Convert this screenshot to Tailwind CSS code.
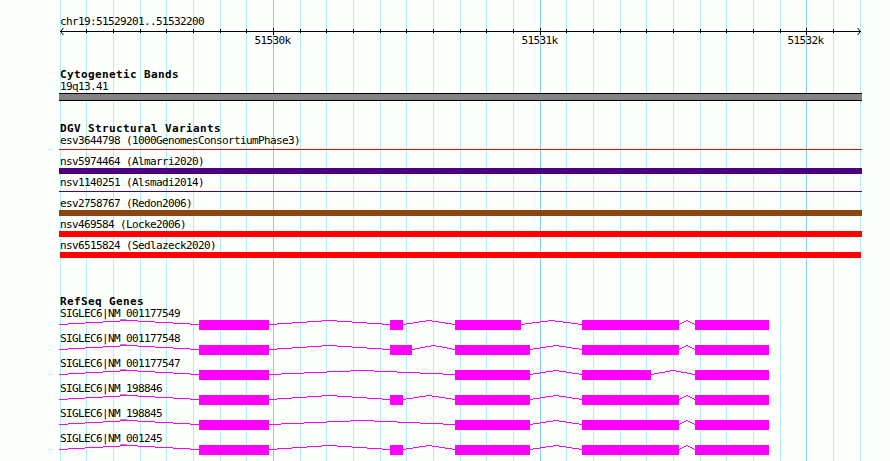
<!DOCTYPE html>
<html lang="en">
<head>
  <meta charset="UTF-8" />
  <meta name="viewport" content="width=device-width, initial-scale=1.0" />
  <title>chr19:51529201..51532200</title>
  <script src="https://cdn.jsdelivr.net/npm/@tailwindcss/browser@4"></script>
</head>
<body class="relative h-[461px] overflow-hidden bg-[#fdfffc] text-black font-['DejaVu_Sans_Mono','Liberation_Mono',monospace] text-[11px] leading-[12px] tracking-[-0.622px]">

  <!-- Grid lines behind every track -->
  <svg id="grid" class="absolute inset-0" width="890" height="461" shape-rendering="crispEdges"></svg>

  <main class="relative ml-[59px] w-[803px] pt-[15px]">

    <!-- Ruler -->
    <header>
      <h1 class="h-3 pt-px pl-px">chr19:51529201..51532200</h1>
      <svg id="ruler" class="block overflow-visible" width="803" height="20"></svg>
    </header>

    <!-- Cytogenetic bands -->
    <section class="mt-[21px]">
      <h2 class="h-3 pt-px pl-px font-bold tracking-[0.378px]">Cytogenetic Bands</h2>
      <p class="h-3 pt-px pl-px">19q13.41</p>
      <div class="mt-px h-2 border-y border-black bg-[#848284]"></div>
    </section>

    <!-- Structural variants -->
    <section class="mt-[21px]">
      <h2 class="h-3 pt-px pl-px font-bold tracking-[0.378px]">DGV Structural Variants</h2>
      <div class="h-[21px]">
        <p class="h-3 pt-px pl-px">esv3644798 (1000GenomesConsortiumPhase3)</p>
        <div class="mt-[3px] h-px bg-[#ff0000]"></div>
      </div>
      <div class="h-[21px]">
        <p class="h-3 pt-px pl-px">nsv5974464 (Almarri2020)</p>
        <div class="mt-px h-1.5 bg-[#4b0082]"></div>
      </div>
      <div class="h-[21px]">
        <p class="h-3 pt-px pl-px">nsv1140251 (Alsmadi2014)</p>
        <div class="mt-[3px] h-px bg-[#4b0082]"></div>
      </div>
      <div class="h-[21px]">
        <p class="h-3 pt-px pl-px">esv2758767 (Redon2006)</p>
        <div class="mt-px h-1.5 bg-[#8b4513]"></div>
      </div>
      <div class="h-[21px]">
        <p class="h-3 pt-px pl-px">nsv469584 (Locke2006)</p>
        <div class="mt-px h-1.5 bg-[#ff0000]"></div>
      </div>
      <div class="h-[21px]">
        <p class="h-3 pt-px pl-px">nsv6515824 (Sedlazeck2020)</p>
        <div class="mx-px mt-px h-1.5 bg-[#ff0000]"></div>
      </div>
    </section>

    <!-- Genes -->
    <section class="mt-[35px]">
      <h2 class="h-3 pt-px pl-px font-bold tracking-[0.378px]">RefSeq Genes</h2>
      <div id="genes"></div>
    </section>
  </main>

  <script>
    const LEFT = 59;
    const isMajor = n => n % 10 === 8;
    const gridX = n => Math.floor(60 + n * 80 / 3);

    // minor line every 100 bp, major every 1 kb
    let lines = '';
    let ticks = '';
    for (let n = 0; n <= 30; n++) {
      const x = gridX(n);
      lines += `<rect x="${x}" y="0" width="1" height="461" fill="${isMajor(n) ? '#87ceeb' : '#afeeee'}"/>`;
      if (n === 0 || n === 30) continue;
      ticks += isMajor(n)
        ? `<rect x="${x - LEFT}" y="1" width="1" height="7"/>
           <text x="${x - LEFT - 18.5}" y="17">${51530 + (n - 8) / 10}k</text>`
        : `<rect x="${x - LEFT}" y="2" width="1" height="4"/>`;
    }
    document.getElementById('grid').innerHTML = lines;
    document.getElementById('ruler').innerHTML = `
      <rect x="1" y="4" width="801" height="1"/>
      <path d="M4.5 1L1.5 4.5L4.5 8M798.5 1L801.5 4.5L798.5 8" fill="none" stroke="black"/>
      ${ticks}`;

    // exons as [start, end] in pixels
    const genes = [
      ['SIGLEC6|NM_001177549', [[199, 269], [390, 403], [455, 521], [582, 679], [695, 769]]],
      ['SIGLEC6|NM_001177548', [[199, 269], [390, 412], [455, 530], [582, 679], [695, 769]]],
      ['SIGLEC6|NM_001177547', [[199, 269], [455, 530], [582, 651], [695, 769]]],
      ['SIGLEC6|NM_198846', [[199, 269], [390, 403], [455, 530], [582, 679], [695, 769]]],
      ['SIGLEC6|NM_198845', [[199, 269], [455, 530], [582, 679], [695, 769]]],
      ['SIGLEC6|NM_001245', [[199, 269], [390, 403], [455, 530], [582, 679], [695, 769]]],
    ];

    // intron: rises four pixels to the middle and falls back, in whole-pixel steps
    const intron = (a, b) => {
      const step = (b - a) / 16;
      const heights = [0, 1, 2, 3, 4, 3, 2, 1, 0];
      let x = a;
      return heights.map((h, i) => {
        const next = i === 8 ? b : Math.round(a + step * (2 * i + 1));
        const run = `<rect x="${x}" y="${5 - h}" width="${next - x}" height="1" fill="#ff00ff"/>`;
        x = next;
        return run;
      }).join('');
    };

    document.getElementById('genes').innerHTML = genes.map(([name, exons]) => {
      let from = LEFT;
      let shapes = '';
      exons.forEach(([start, end]) => {
        shapes += intron(from - LEFT, start - LEFT);
        shapes += `<rect x="${start - LEFT}" y="1" width="${end - start}" height="10" fill="#ff00ff"/>`;
        from = end;
      });
      return `
        <div class="h-[25px]">
          <p class="h-3 pt-px pl-px">${name}</p>
          <svg class="block" width="803" height="13" shape-rendering="crispEdges">${shapes}</svg>
        </div>`;
    }).join('');
  </script>
</body>
</html>
